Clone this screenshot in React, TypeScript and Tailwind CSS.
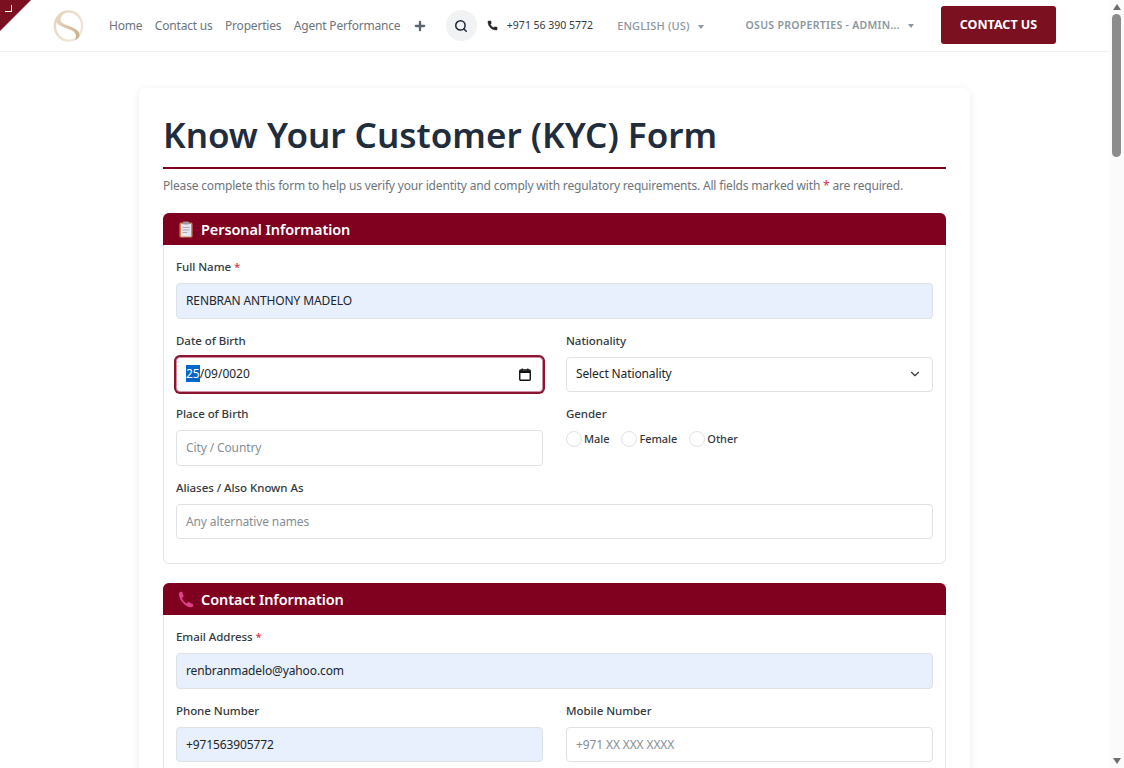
import { ChevronDown, Phone, Plus, Search } from "lucide-react";
import type { ReactNode } from "react";

function Logo() {
  return (
    <svg width="31" height="32" viewBox="0 0 31 32" fill="none">
      <defs>
        <linearGradient id="ring" x1="0" y1="0" x2="1" y2="1">
          <stop offset="0" stopColor="#e4d3ba" />
          <stop offset="1" stopColor="#f3ebdf" />
        </linearGradient>
        <linearGradient id="ess" x1="0" y1="0" x2="1" y2="1">
          <stop offset="0" stopColor="#ecdfcc" />
          <stop offset="1" stopColor="#c9ab84" />
        </linearGradient>
      </defs>
      <ellipse cx="15.5" cy="16" rx="13.6" ry="14.6" stroke="url(#ring)" strokeWidth="2.4" />
      <path
        d="M3 9 C5 4 10 2 14 2 C9 4 6.5 8 8 11.5 C10 15 19 16 24 20 C28 24 27 28 22 30.5 C24 26 23 23 19 20.5 C13 17.5 2 16 3 9 Z"
        fill="url(#ess)"
      />
    </svg>
  );
}

function ClipboardEmoji() {
  return (
    <svg width="16" height="17" viewBox="0 0 16 17">
      <rect x="1.5" y="1.5" width="13" height="15" rx="1.5" fill="#d08a58" />
      <rect x="3" y="3" width="10" height="12.5" fill="#e6e6ee" />
      <rect x="5" y="0.5" width="6" height="3" rx="1" fill="#9a9aa2" />
      <path d="M4.5 6.5h7M4.5 9h7M4.5 11.5h5" stroke="#a5a5b2" strokeWidth="0.9" />
    </svg>
  );
}

function PhoneEmoji() {
  return (
    <svg width="16" height="17" viewBox="0 0 16 17">
      <path
        d="M1 2.2 C1.6 1 3.4 0.4 4.2 1 L5.6 5 C5.4 6 4.4 6.4 4 7 C4.6 9 6.6 11.6 8.6 12.4 C9.4 12 9.8 11.2 10.8 11 L15.2 13.4 C15.8 14.4 14.6 16 13.2 16.2 C7.4 16.4 0.6 8.6 1 2.2 Z"
        fill="#e0408c"
      />
    </svg>
  );
}

function Caret() {
  return <span className="ml-[8px] inline-block border-x-[3.5px] border-t-[4px] border-x-transparent border-t-[#8b97a1]" />;
}

function Section({ icon, title, children }: { icon: ReactNode; title: string; children: ReactNode }) {
  return (
    <section className="rounded-[6px] border border-[#e2e4e7]">
      <div className="-mx-px -mt-px flex h-[32px] items-center gap-[7px] rounded-t-[6px] bg-[#800020] pt-px pl-[15px] text-[14.5px] font-semibold tracking-[-0.1px] text-white">
        {icon}
        <span>{title}</span>
      </div>
      <div className="flex flex-col gap-[13px] px-3 pt-[13px] pb-[24px]">{children}</div>
    </section>
  );
}

function Field({ label, required, children }: { label: string; required?: boolean; children: ReactNode }) {
  return (
    <div className="flex min-w-0 flex-col gap-[7px]">
      <label className="h-[18px] text-[11.5px] leading-[18px] font-medium tracking-[-0.05px] text-[#343a40]">
        {label}
        {required && <span className="text-[#dc3545]"> *</span>}
      </label>
      {children}
    </div>
  );
}

function TextInput({ value, placeholder, filled }: { value?: string; placeholder?: string; filled?: boolean }) {
  return (
    <input
      readOnly
      defaultValue={value}
      placeholder={placeholder}
      className={`h-[35.5px] w-full rounded-[4px] border border-[#dee2e6] px-[9px] text-[12px] tracking-[-0.12px] text-[#212529] outline-none placeholder:text-[#868e96] ${
        filled ? "bg-[#e8f0fe]" : "bg-white"
      }`}
    />
  );
}

function DateField() {
  return (
    <div className="flex h-[35.5px] items-center justify-between rounded-[4px] border border-[#d08fa0] bg-white pr-[11px] pl-[9px] text-[12px] text-[#212529] shadow-[0_0_0_2px_#8a1530]">
      <span>
        <span className="bg-[#0066cc] text-white">25</span>/09/0020
      </span>
      <svg width="12" height="13" viewBox="0 0 12 13" fill="none">
        <rect x="0.75" y="2" width="10.5" height="10.2" rx="1" stroke="#111" strokeWidth="1.4" />
        <path d="M1 3.8h10" stroke="#111" strokeWidth="2.4" />
        <path d="M3.2 0.5v2M8.8 0.5v2" stroke="#111" strokeWidth="1.2" />
      </svg>
    </div>
  );
}

function Radio({ label }: { label: string }) {
  return (
    <div className="flex items-center gap-[2px]">
      <span className="size-[16px] rounded-full border border-[#dee2e6] bg-white" />
      <span className="text-[11px] font-medium tracking-[-0.05px] text-[#343a40]">{label}</span>
    </div>
  );
}

function Header() {
  return (
    <header className="relative flex h-[52px] shrink-0 items-center border-b border-[#f0f0f0] bg-white pl-[53px]">
      <div className="absolute top-0 left-0 h-0 w-0 border-t-[31px] border-r-[31px] border-t-[#7b1020] border-r-transparent" />
      <div className="absolute top-[5px] left-[5px] h-[7px] w-[7px] border-r border-b border-white" />
      <Logo />
      <nav className="ml-[25px] flex items-center gap-[12.5px] pt-px text-[12px] tracking-[-0.2px] text-[#6c757d]">
        <span>Home</span>
        <span>Contact us</span>
        <span>Properties</span>
        <span>Agent Performance</span>
        <Plus size={14} strokeWidth={4} className="text-[#5c6670]" />
      </nav>
      <div className="ml-[19px] flex size-[31px] items-center justify-center rounded-full bg-[#f1f2f3]">
        <Search size={14} strokeWidth={2.6} className="text-[#1f2937]" />
      </div>
      <Phone size={11} fill="#212529" strokeWidth={1} className="ml-[10px] text-[#212529]" />
      <span className="ml-[9px] text-[10.5px] text-[#343a40]">+971 56 390 5772</span>
      <div className="ml-[24px] flex items-center pt-[2px] text-[11px] font-medium tracking-[0.15px] text-[#8b97a1]">
        ENGLISH (US)
        <Caret />
      </div>
      <div className="ml-[42px] flex items-center text-[10.5px] font-semibold tracking-[0.3px] text-[#8b97a1]">
        OSUS PROPERTIES - ADMIN...
        <Caret />
      </div>
      <button className="-mt-px ml-[27px] h-[38px] w-[115px] rounded-[3px] bg-[#7b1020] text-[12.5px] font-bold text-white">
        CONTACT US
      </button>
    </header>
  );
}

function Scrollbar() {
  return (
    <div className="flex w-[15px] shrink-0 flex-col items-center bg-[#fbfbfb] pt-[4px]">
      <span className="border-x-[4.5px] border-b-[6px] border-x-transparent border-b-[#6e6e6e]" />
      <span className="mt-[4px] h-[143px] w-[9px] rounded-full bg-[#8c8c8c]" />
      <span className="mt-auto mb-[4px] border-x-[4.5px] border-t-[6px] border-x-transparent border-t-[#6e6e6e]" />
    </div>
  );
}

export default function App() {
  return (
    <div className="flex h-screen overflow-hidden bg-white font-['Noto_Sans',sans-serif]">
      <div className="flex min-w-0 flex-1 flex-col">
        <Header />
        <main className="min-h-0 flex-1 overflow-hidden pt-[36px] pl-[139px]">
          <div className="w-[831px] rounded-[8px] bg-white px-6 pt-[24px] shadow-[0_2px_10px_rgba(0,0,0,0.09)]">
            <h1 className="h-[57px] border-b-2 border-[#800020] text-[35px] leading-[46px] font-semibold whitespace-nowrap text-[#1f2d3d]">
              Know Your Customer (KYC) Form
            </h1>
            <p className="mt-[7px] mb-[17px] text-[12px] leading-[20px] tracking-[-0.18px] text-[#6c757d]">
              Please complete this form to help us verify your identity and comply with regulatory requirements. All
              fields marked with <span className="text-[#dc3545]">*</span> are required.
            </p>
            <Section icon={<ClipboardEmoji />} title="Personal Information">
              <Field label="Full Name" required>
                <TextInput value="RENBRAN ANTHONY MADELO" filled />
              </Field>
              <div className="grid grid-cols-2 gap-x-[23px] gap-y-[13px]">
                <Field label="Date of Birth">
                  <DateField />
                </Field>
                <Field label="Nationality">
                  <div className="flex h-[35.5px] items-center justify-between rounded-[4px] border border-[#dee2e6] bg-white pr-[10px] pl-[9px] text-[12px] tracking-[-0.12px] text-[#212529]">
                    Select Nationality
                    <ChevronDown size={14} className="text-[#343a40]" />
                  </div>
                </Field>
                <Field label="Place of Birth">
                  <TextInput placeholder="City / Country" />
                </Field>
                <Field label="Gender">
                  <div className="flex items-center gap-[12px] pt-px">
                    <Radio label="Male" />
                    <Radio label="Female" />
                    <Radio label="Other" />
                  </div>
                </Field>
              </div>
              <Field label="Aliases / Also Known As">
                <TextInput placeholder="Any alternative names" />
              </Field>
            </Section>
            <div className="h-[19px]" />
            <Section icon={<PhoneEmoji />} title="Contact Information">
              <Field label="Email Address" required>
                <TextInput value="renbranmadelo@yahoo.com" filled />
              </Field>
              <div className="grid grid-cols-2 gap-x-[23px]">
                <Field label="Phone Number">
                  <TextInput value="+971563905772" filled />
                </Field>
                <Field label="Mobile Number">
                  <TextInput placeholder="+971 XX XXX XXXX" />
                </Field>
              </div>
            </Section>
          </div>
        </main>
      </div>
      <Scrollbar />
    </div>
  );
}
